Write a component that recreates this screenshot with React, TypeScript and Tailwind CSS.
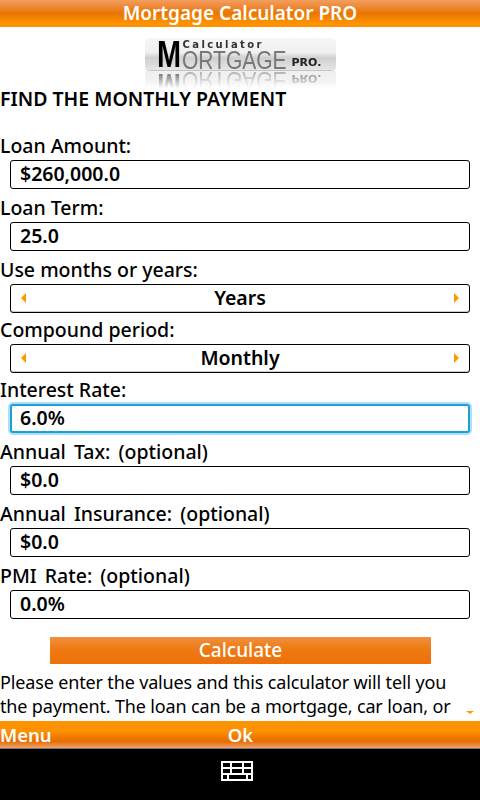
import React from 'react';

const font = { fontFamily: '"Noto Sans", "DejaVu Sans", sans-serif' };

const Label = ({ text, tall, wide }: { text: string; tall?: boolean; wide?: boolean }) => (
  <div
    className={`flex items-end pb-[1px] text-[19.5px] leading-[26px] font-medium text-black whitespace-pre ${tall ? 'h-[33px]' : 'h-[31px]'} ${
      wide ? '[word-spacing:3px]' : ''
    }`}
  >
    {text}
  </div>
);

const TextField = ({ label, value, focused, tall = true, wide }: { label: string; value: string; focused?: boolean; tall?: boolean; wide?: boolean }) => (
  <div>
    <Label text={label} tall={tall} wide={wide} />
    <div
      className={`mx-[10px] h-[29px] rounded-[3px] bg-white text-[19.5px] font-semibold text-black ${
        focused ? 'border-2 border-[#1d9fd8] pl-[8px] leading-[24px] shadow-[0_0_0_2px_#a9e0f5]' : 'border border-black pl-[9px] leading-[26px]'
      }`}
    >
      {value}
    </div>
  </div>
);

const SelectField = ({ label, value, tall }: { label: string; value: string; tall?: boolean }) => (
  <div>
    <Label text={label} tall={tall} />
    <div className="mx-[10px] flex h-[29px] items-center justify-between rounded-[3px] border border-black bg-white px-[10px] pb-[1px] text-[19.5px] leading-[26px] font-semibold text-black shadow-[inset_0_-1px_0_#ccc]">
      <span className="h-0 w-0 border-y-[5px] border-r-[5px] border-y-transparent border-r-[#ff9900]" />
      <span>{value}</span>
      <span className="h-0 w-0 border-y-[5px] border-l-[5px] border-y-transparent border-l-[#ff9900]" />
    </div>
  </div>
);

const Logo = () => (
  <div className="mx-auto mt-[11px] h-[48px] w-[191px]">
    <div className="relative h-[32px] rounded-[5px] bg-[linear-gradient(#f6f6f6_0%,#f0f0f0_45%,#cfcfcf_62%,#e6e6e6_100%)] shadow-[0_1px_0_#c4c4c4] [-webkit-box-reflect:below_1px_linear-gradient(transparent_45%,rgba(255,255,255,0.6))]">
      <span
        className="absolute left-[12px] top-[-2px] origin-left scale-x-[0.78] text-[37px] leading-[38px] font-bold text-black"
        style={{ fontFamily: '"Liberation Sans", sans-serif' }}
      >
        M
      </span>
      <span
        className="absolute left-[38px] top-[1px] text-[10px] leading-[12px] font-bold tracking-[2.4px] text-[#333]"
        style={{ fontFamily: '"DejaVu Sans", sans-serif' }}
      >
        Calculator
      </span>
      <span
        className="absolute left-[37px] top-[9px] origin-left scale-x-[0.84] text-[25px] leading-[26px] text-[#777]"
        style={{ fontFamily: '"Liberation Sans", sans-serif' }}
      >
        ORTGAGE
      </span>
      <span
        className="absolute left-[147px] top-[18px] text-[11px] leading-[14px] font-bold text-[#222]"
        style={{ fontFamily: '"DejaVu Sans", sans-serif' }}
      >
        PRO.
      </span>
    </div>
  </div>
);

const KeyboardIcon = () => (
  <svg width="32" height="20" viewBox="0 0 32 20" shapeRendering="crispEdges">
    <path
      fill="#fff"
      fillRule="evenodd"
      d="M0 0H32V20H0ZM2 2V6H9V2ZM11 2V6H21V2ZM23 2V6H30V2ZM2 8V12H9V8ZM11 8V12H21V8ZM23 8V12H30V8ZM2 14V18H6V14ZM8 14V18H25V14ZM27 14V18H30V14Z"
    />
  </svg>
);

export default function App() {
  return (
    <div className="flex h-[800px] w-[480px] flex-col overflow-hidden bg-white" style={font}>
      <div className="h-[27px] shrink-0 bg-[linear-gradient(#f2a05e_0%,#f09048_15%,#ea7600_50%,#ff9200_85%,#ff9200_100%)] text-center text-[19px] leading-[27px] font-semibold text-white">
        Mortgage Calculator PRO
      </div>

      <div className="relative min-h-0 flex-1 overflow-hidden">
        <Logo />
        <div className="h-[26px] text-[19.5px] leading-[26px] font-semibold text-black">FIND THE MONTHLY PAYMENT</div>
        <div className="mt-[15px]">
          <TextField label="Loan Amount:" value="$260,000.0" />
          <TextField label="Loan Term:" value="25.0" />
          <SelectField label="Use months or years:" value="Years" tall />
          <SelectField label="Compound period:" value="Monthly" />
          <TextField label="Interest Rate:" value="6.0%" focused tall={false} />
          <TextField label="Annual Tax: (optional)" value="$0.0" wide />
          <TextField label="Annual Insurance: (optional)" value="$0.0" wide />
          <TextField label="PMI Rate: (optional)" value="0.0%" wide />
        </div>
        <div className="mx-[50px] mt-[18px] h-[27px] w-[381px] rounded-[1px] bg-[linear-gradient(#f09040_0%,#ee7a12_45%,#ef700a_100%)] text-center text-[19px] leading-[27px] font-medium text-white">
          Calculate
        </div>
        <p className="mt-[6px] w-[468px] text-[18px] leading-[24px] tracking-[-0.15px] text-black">
          Please enter the values and this calculator will tell you the payment. The loan can be a mortgage, car loan, or
          any other simple interest amortization loan of a fixed term.
        </p>
        <span className="absolute right-[6px] bottom-[7px] h-0 w-0 border-x-[4px] border-t-[3px] border-x-transparent border-t-[#ff9900]" />
      </div>

      <div className="flex h-[27px] shrink-0 bg-[linear-gradient(#ff9200_0%,#ff9200_35%,#e66e00_75%,#f0a070_100%)] text-[18.5px] leading-[27px] font-semibold text-white">
        <span>Menu</span>
        <span className="ml-[176px]">Ok</span>
      </div>
      <div className="flex h-[52px] shrink-0 items-center justify-center border-t border-[#777] bg-black pr-[6px] pb-[8px]">
        <KeyboardIcon />
      </div>
    </div>
  );
}
